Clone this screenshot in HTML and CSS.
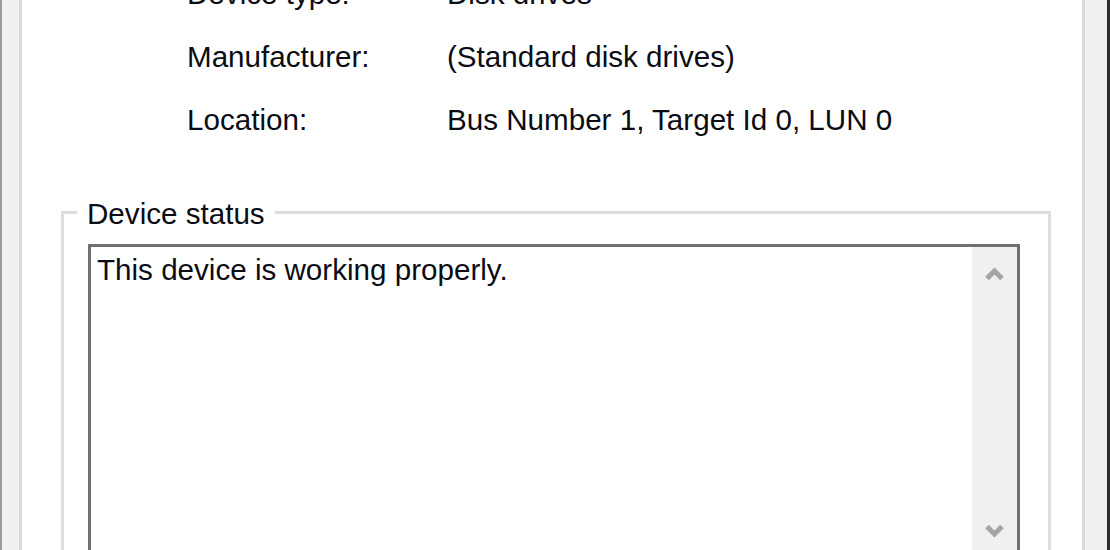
FILE: index.html
```html
<!DOCTYPE html>
<html lang="en">
<head>
<meta charset="utf-8">
<title>Device properties</title>
<link rel="stylesheet" href="styles.css">
</head>
<body>
<div class="window">
  <div class="edge-left"></div>
  <div class="frame-side frame-left"></div>
  <main class="page">
    <div class="props">
      <div class="label">Device type:</div><div class="value">Disk drives</div>
      <div class="label">Manufacturer:</div><div class="value">(Standard disk drives)</div>
      <div class="label">Location:</div><div class="value">Bus Number 1, Target Id 0, LUN 0</div>
    </div>
    <fieldset class="group">
      <legend class="group-title">Device status</legend>
      <div class="status">
        <div class="status-text">This device is working properly.</div>
        <div class="scrollbar">
          <svg class="arrow" width="21" height="15" viewBox="0 0 21 15"><polyline points="3,12.5 10.5,5 18,12.5" fill="none" stroke="#a4a4a4" stroke-width="5"/></svg>
          <svg class="arrow arrow-down" width="21" height="15" viewBox="0 0 21 15"><polyline points="3,2.5 10.5,10 18,2.5" fill="none" stroke="#a4a4a4" stroke-width="5"/></svg>
        </div>
      </div>
    </fieldset>
  </main>
  <div class="frame-side frame-right"></div>
  <div class="edge-right"></div>
</div>
</body>
</html>
```
FILE: styles.css
```css
html, body {
  margin: 0;
  height: 100%;
  overflow: hidden;
  background: #ffffff;
}

.window {
  display: flex;
  height: 550px;
  font-family: "Liberation Sans", Arial, sans-serif;
  font-size: 29.6px;
  color: #0c0c14;
}

.edge-left {
  width: 2px;
  background: #9c9c9c;
}

.frame-side {
  background: #f0f0f0;
}

.frame-left {
  width: 17px;
}

.frame-right {
  width: 22px;
}

.edge-right {
  width: 3px;
  background: #2e2e2e;
}

.page {
  flex: 1;
  min-width: 0;
  background: #ffffff;
  border-left: 3px solid #dadada;
  border-right: 3px solid #dadada;
  padding: 0 31px 0 39px;
  overflow: hidden;
}

.props {
  display: grid;
  grid-template-columns: 260px auto;
  row-gap: 31px;
  line-height: 32px;
  margin: -22px 0 0 126px;
  white-space: nowrap;
}

.group {
  margin: 58px 0 0 0;
  padding: 0 28px 0 24px;
  border: 3px solid #dedede;
  min-width: 0;
  height: 520px;
}

.group-title {
  margin-left: -11px;
  padding: 4px 10px 0;
  line-height: 32px;
}

.status {
  margin-top: 14px;
  border: 3px solid #707070;
  display: flex;
  height: 311px;
}

.status-text {
  flex: 1;
  padding: 7px 6px;
  line-height: 32px;
}

.scrollbar {
  width: 45px;
  background: #f0f0f0;
  display: flex;
  flex-direction: column;
  align-items: center;
  padding-top: 19px;
}

.arrow {
  display: block;
}

.arrow-down {
  margin-top: auto;
  margin-bottom: 19px;
}
```
